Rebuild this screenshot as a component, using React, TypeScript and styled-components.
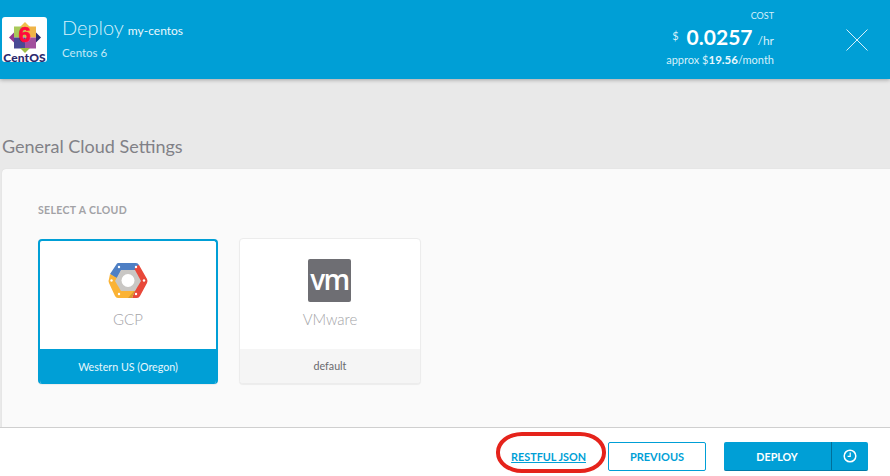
import styled, { createGlobalStyle } from "styled-components"

const Global = createGlobalStyle`
  html, body {
    margin: 0;
    padding: 0;
    background: #fff;
  }
  * {
    box-sizing: border-box;
  }
`

const Page = styled.div`
  width: 890px;
  height: 476px;
  display: flex;
  flex-flow: column;
  overflow: hidden;
  font-family: Lato, "Liberation Sans", Arial, sans-serif;
  background: #e8e8e8;
`

const Header = styled.div`
  height: 79px;
  flex: none;
  display: flex;
  align-items: center;
  padding: 0 22px 0 2px;
  background: #009fd6;
  color: #fff;
  box-shadow: 0 1px 4px rgba(0, 0, 0, 0.3);
  position: relative;
  z-index: 1;
`

const LogoTile = styled.div`
  width: 45px;
  height: 45px;
  margin-top: -1px;
  background: #fff;
  border-radius: 3px;
  display: flex;
  flex-flow: column;
  align-items: center;
`

const CentosMark = styled.div`
  width: 32px;
  height: 31px;
  margin-top: 5px;
  position: relative;

  svg {
    display: block;
  }
`

const CentosSix = styled.span`
  position: absolute;
  left: 0;
  right: 0;
  top: 0;
  text-align: center;
  font-family: "Liberation Sans", Arial, sans-serif;
  font-size: 22px;
  line-height: 25px;
  font-weight: 700;
  color: #ff0a3c;
  -webkit-text-stroke: 0.6px #ff0a3c;
`

const CentosName = styled.div`
  margin-top: -1px;
  font-size: 12px;
  line-height: 11px;
  font-weight: 900;
  color: #2c2a6e;
  letter-spacing: 0.1px;
`

const TitleBlock = styled.div`
  margin-left: 15px;
  display: flex;
  flex-flow: column;
  margin-top: -3px;
`

const TitleRow = styled.div`
  display: flex;
  align-items: baseline;
  gap: 4px;
  font-size: 20px;
  line-height: 25px;
  font-weight: 300;
  color: #d6f0fa;
`

const TitleName = styled.span`
  font-size: 12px;
  font-weight: 400;
  color: #eaf8fd;
`

const SubTitle = styled.div`
  font-size: 11.5px;
  line-height: 16px;
  margin-top: 2px;
  color: #c4e9f6;
`

const CostBlock = styled.div`
  margin-left: auto;
  display: flex;
  flex-flow: column;
  align-items: flex-end;
  margin-top: -3px;
  color: #d6f0fa;
`

const CostLabel = styled.div`
  font-size: 9px;
  line-height: 11px;
`

const CostRow = styled.div`
  display: flex;
  align-items: baseline;
  margin-top: 3px;
  font-size: 12px;
  line-height: 26px;

  sup {
    font-size: 11px;
    line-height: 0;
    position: relative;
    top: -5px;
    margin-right: 8px;
  }

  strong {
    font-size: 21px;
    font-weight: 700;
    color: #fff;
    margin-right: 5px;
  }
`

const CostMonth = styled.div`
  font-size: 11px;
  line-height: 14px;
  margin-top: -1px;

  strong {
    font-size: 11.5px;
    font-weight: 700;
    color: #eaf8fd;
  }
`

const CloseButton = styled.div`
  margin-left: 72px;
  width: 22px;
  height: 22px;

  svg {
    display: block;
  }
`

const Body = styled.div`
  flex: 1;
  min-height: 0;
  display: flex;
  flex-flow: column;
  padding-left: 2px;
  background: #e9e9e9;
`

const SectionTitle = styled.div`
  flex: none;
  height: 90px;
  padding-top: 56px;
  font-size: 18px;
  line-height: 22px;
  color: #818187;
`

const Panel = styled.div`
  flex: 1;
  padding: 34px 36px 0;
  background: #fafafa;
  border-radius: 4px 0 0 0;
  box-shadow: 0 0 1px rgba(0, 0, 0, 0.15);
`

const FieldLabel = styled.div`
  font-size: 10.5px;
  line-height: 14px;
  font-weight: 700;
  color: #a2a2a6;
  letter-spacing: 0.35px;
`

const CloudRow = styled.div`
  display: flex;
  align-items: flex-end;
  gap: 21px;
  margin-top: 21px;
`

const CloudCard = styled.div<{ $selected?: boolean }>`
  width: ${p => (p.$selected ? "180px" : "182px")};
  height: ${p => (p.$selected ? "145px" : "146px")};
  display: flex;
  flex-flow: column;
  border-radius: 4px;
  overflow: hidden;
  background: #fff;
  border: ${p => (p.$selected ? "2px solid #009fd6" : "1px solid #ececec")};
  border-bottom-width: ${p => (p.$selected ? "0" : "1px")};
  box-shadow: 0 1px 1px rgba(0, 0, 0, 0.06);
`

const CloudBody = styled.div`
  flex: 1;
  display: flex;
  flex-flow: column;
  align-items: center;
`

const CloudIcon = styled.div<{ $selected?: boolean }>`
  height: ${p => (p.$selected ? "44px" : "45px")};
  margin-top: ${p => (p.$selected ? "18px" : "19px")};
  display: flex;
  align-items: center;
  justify-content: center;

  svg {
    display: block;
  }
`

const VmTile = styled.div`
  width: 43px;
  height: 43px;
  margin-right: 1px;
  border-radius: 2px;
  background: #6e6e73;
  color: #fff;
  display: flex;
  align-items: center;
  justify-content: center;
  font-family: "Open Sans", sans-serif;
  font-size: 28px;
  line-height: 36px;
  font-weight: 600;
  letter-spacing: -1.5px;
  padding-bottom: 4px;
`

const CloudName = styled.div`
  margin-top: 6px;
  font-size: 15px;
  line-height: 20px;
  font-weight: 300;
  color: #a4a4a8;
`

const CloudRegion = styled.div<{ $selected?: boolean }>`
  flex: none;
  height: ${p => (p.$selected ? "35px" : "34px")};
  margin: ${p => (p.$selected ? "0 -2px" : "0")};
  padding-bottom: 1px;
  display: flex;
  align-items: center;
  justify-content: center;
  font-size: 10.7px;
  background: ${p => (p.$selected ? "#009fd6" : "#f5f5f5")};
  color: ${p => (p.$selected ? "#e6f7fd" : "#6a6a6e")};
`

const Footer = styled.div`
  flex: none;
  height: 49px;
  display: flex;
  align-items: center;
  padding: 9px 22px 0 0;
  background: #fff;
  border-top: 1px solid #cfcfcf;
  position: relative;
`

const JsonLink = styled.a`
  margin-left: auto;
  margin-right: 22px;
  font-size: 10.8px;
  font-weight: 700;
  color: #009fd6;
  text-decoration: underline;
`

const Annotation = styled.div`
  position: absolute;
  left: 496px;
  top: 4px;
  width: 110px;
  height: 41px;
  border: 4.5px solid #e5231b;
  border-radius: 26px / 20px;
`

const OutlineButton = styled.div`
  width: 98px;
  height: 29px;
  display: flex;
  align-items: center;
  justify-content: center;
  border: 1px solid #009fd6;
  border-radius: 2px;
  font-size: 11px;
  font-weight: 700;
  color: #009fd6;
`

const DeployGroup = styled.div`
  margin-left: 18px;
  width: 144px;
  height: 29px;
  display: flex;
  border-radius: 2px;
  overflow: hidden;
  background: #009fd6;
  border-bottom: 1px solid #007ba8;
  color: #fff;
  font-size: 10.7px;
  font-weight: 700;
`

const DeployLabel = styled.div`
  flex: 1;
  display: flex;
  align-items: center;
  justify-content: center;
  padding-right: 1px;
`

const ScheduleButton = styled.div`
  width: 37px;
  display: flex;
  align-items: center;
  justify-content: center;
  border-left: 1px solid #006f99;

  svg {
    display: block;
  }
`

const CentosIcon = () => (
  <svg width="32" height="31" viewBox="0 0 32 31">
    <rect x="5" y="4.5" width="11" height="11" fill="#a9c95a" />
    <rect x="16" y="4.5" width="11" height="11" fill="#efb448" />
    <rect x="5" y="15.5" width="11" height="11" fill="#4a4994" />
    <rect x="16" y="15.5" width="11" height="11" fill="#a14f9d" />
    <path d="M16 0 L21 5 H11 Z" fill="#f0bf4e" />
    <path d="M32 15.5 L27 10.5 V20.5 Z" fill="#2c2a6e" />
    <path d="M0 15.5 L5 10.5 V20.5 Z" fill="#93378f" />
    <path d="M16 31 L11 26 H21 Z" fill="#9dbf45" />
  </svg>
)

const GcpIcon = () => (
  <svg width="40" height="36" viewBox="0 0 40 36">
    <path d="M10 0 H28 Q30 0 31 2 L26 8 H13 L9 16 L2 11 L8 2 Q9 0 10 0 Z" fill="#4e7fc4" />
    <path d="M28 3 L31 2 L39 16 Q40 18 39 20 L32 33 Q31 35 29 35 H24 L27 27 L31 18 L26 8 Z" fill="#e8483a" />
    <path d="M2 11 L9 15 L14 27 L27 27 L24 35 H10 Q8 35 7 33 L1 20 Q0 18 1 16 Z" fill="#fbb335" />
    <path d="M27 27 L30 21 L24 35 H20 Z" fill="#d9972f" />
    <path d="M13 7 H27 L33 18 L27 28 H13 L7 18 Z" fill="#c9c7c4" />
    <circle cx="20" cy="17.5" r="6.5" fill="#fff" />
    <g fill="#fff">
      <circle cx="11" cy="4" r="1.2" />
      <circle cx="28" cy="4" r="1.2" />
      <circle cx="36" cy="17.5" r="1.2" />
      <circle cx="28" cy="31" r="1.2" />
      <circle cx="11" cy="31" r="1.2" />
      <circle cx="3.5" cy="17.5" r="1.2" />
    </g>
  </svg>
)

const CloseIcon = () => (
  <svg width="22" height="22" viewBox="0 0 22 22" fill="none" stroke="#d6f0fa" strokeWidth="1">
    <path d="M0.5 0.5 L21.5 21.5 M21.5 0.5 L0.5 21.5" />
  </svg>
)

const ClockIcon = () => (
  <svg width="14" height="14" viewBox="0 0 14 14" fill="none" stroke="#fff" strokeWidth="1.5">
    <circle cx="7" cy="7" r="5.8" />
    <path d="M7.2 3.6 V7.4 H4.6" strokeWidth="1.2" />
  </svg>
)

export default function App() {
  return (
    <Page>
      <Global />
      <Header>
        <LogoTile>
          <CentosMark>
            <CentosIcon />
            <CentosSix>6</CentosSix>
          </CentosMark>
          <CentosName>CentOS</CentosName>
        </LogoTile>
        <TitleBlock>
          <TitleRow>
            Deploy <TitleName>my-centos</TitleName>
          </TitleRow>
          <SubTitle>Centos 6</SubTitle>
        </TitleBlock>
        <CostBlock>
          <CostLabel>COST</CostLabel>
          <CostRow>
            <sup>$</sup>
            <strong>0.0257</strong>/hr
          </CostRow>
          <CostMonth>
            approx $<strong>19.56</strong>/month
          </CostMonth>
        </CostBlock>
        <CloseButton>
          <CloseIcon />
        </CloseButton>
      </Header>
      <Body>
        <SectionTitle>General Cloud Settings</SectionTitle>
        <Panel>
          <FieldLabel>SELECT A CLOUD</FieldLabel>
          <CloudRow>
            <CloudCard $selected>
              <CloudBody>
                <CloudIcon $selected>
                  <GcpIcon />
                </CloudIcon>
                <CloudName>GCP</CloudName>
              </CloudBody>
              <CloudRegion $selected>Western US (Oregon)</CloudRegion>
            </CloudCard>
            <CloudCard>
              <CloudBody>
                <CloudIcon>
                  <VmTile>vm</VmTile>
                </CloudIcon>
                <CloudName>VMware</CloudName>
              </CloudBody>
              <CloudRegion>default</CloudRegion>
            </CloudCard>
          </CloudRow>
        </Panel>
      </Body>
      <Footer>
        <JsonLink>RESTFUL JSON</JsonLink>
        <Annotation />
        <OutlineButton>PREVIOUS</OutlineButton>
        <DeployGroup>
          <DeployLabel>DEPLOY</DeployLabel>
          <ScheduleButton>
            <ClockIcon />
          </ScheduleButton>
        </DeployGroup>
      </Footer>
    </Page>
  )
}
